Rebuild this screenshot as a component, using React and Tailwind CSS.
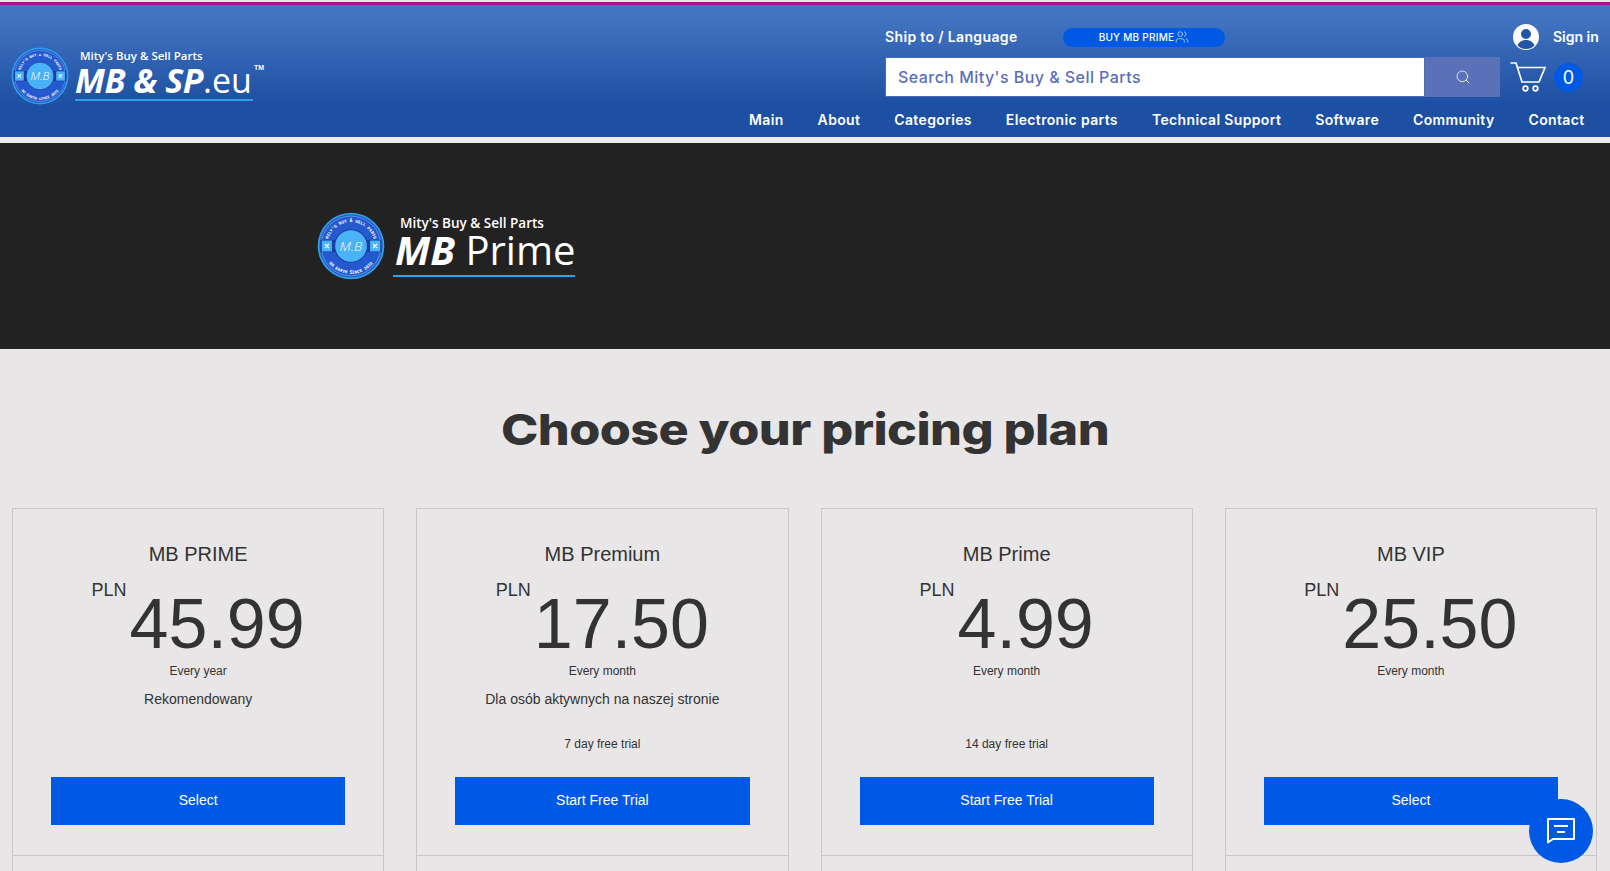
import React from "react";
import { Search, Users } from "lucide-react";

const plans = [
  { name: "MB PRIME", price: "45.99", period: "Every year", desc: "Rekomendowany", trial: "", cta: "Select" },
  { name: "MB Premium", price: "17.50", period: "Every month", desc: "Dla osób aktywnych na naszej stronie", trial: "7 day free trial", cta: "Start Free Trial" },
  { name: "MB Prime", price: "4.99", period: "Every month", desc: "", trial: "14 day free trial", cta: "Start Free Trial" },
  { name: "MB VIP", price: "25.50", period: "Every month", desc: "", trial: "", cta: "Select" },
];

const navItems = ["Main", "About", "Categories", "Electronic parts", "Technical Support", "Software", "Community", "Contact"];

// round badge of the logo, same drawing in the header and in the banner
const LogoBadge = ({ size, id }) => (
  <svg width={size} height={size} viewBox="0 0 100 100" className="shrink-0">
    <defs>
      <path id={`${id}-top`} d="M 15 50 A 35 35 0 0 1 85 50" />
      <path id={`${id}-bottom`} d="M 9 50 A 41 41 0 0 0 91 50" />
    </defs>
    <circle cx="50" cy="50" r="49" fill="#2f9fe8" />
    <circle cx="50" cy="50" r="46.5" fill="#2459cf" />
    <circle cx="50" cy="50" r="44" fill="none" stroke="#7fc4f5" strokeWidth="0.8" />
    <text fontSize="6.5" fontWeight="700" fill="#fff" fontFamily="'Liberation Mono', monospace">
      <textPath href={`#${id}-top`} startOffset="50%" textAnchor="middle">MILY'S BUY &amp; SELL PARTS</textPath>
    </text>
    <text fontSize="6.5" fontWeight="700" fill="#fff" fontFamily="'Liberation Mono', monospace">
      <textPath href={`#${id}-bottom`} startOffset="50%" textAnchor="middle">NO EARTH SINCE 2022</textPath>
    </text>
    <rect x="5" y="41" width="90" height="18" fill="#1a3f9e" />
    <rect x="7" y="42" width="15" height="16" fill="#4ab2f7" />
    <rect x="78" y="42" width="15" height="16" fill="#4ab2f7" />
    <path d="M11.5 47l6 6M17.5 47l-6 6M82.500 47l6 6M88.500 47l-6 6" stroke="#fff" strokeWidth="1.8" />
    <circle cx="50" cy="50" r="24" fill="#4ab2f7" stroke="#1a3f9e" strokeWidth="1.5" />
    <text x="50" y="57" fontSize="20" fontStyle="italic" fontWeight="300" fill="#fff" textAnchor="middle" fontFamily="'Open Sans', sans-serif">M.B</text>
  </svg>
);

const CartIcon = () => (
  <svg width="37" height="30" viewBox="0 0 37 30" fill="none" stroke="#fff" strokeWidth="1.7">
    <path d="M0.5 1h5.5l6 19h17l6-14.5H8" />
    <circle cx="15.5" cy="26.5" r="2.3" />
    <circle cx="25.5" cy="26.5" r="2.3" />
  </svg>
);

const Avatar = () => (
  <svg width="26" height="26" viewBox="0 0 26 26">
    <circle cx="13" cy="13" r="13" fill="#fff" />
    <circle cx="13" cy="10" r="5" fill="#2456a8" />
    <path d="M4.5 21.5c1.500-4 5-5.500 8.500-5.500s7 1.500 8.500 5.500a12 12 0 0 1-17 0z" fill="#2456a8" />
  </svg>
);

const ChatIcon = () => (
  <svg width="28" height="26" viewBox="0 0 28 26" fill="none" stroke="#fff" strokeWidth="2">
    <path d="M1 1h26v20H6l-5 3.500z" strokeLinejoin="round" />
    <path d="M7 8h14M10 14h8" />
  </svg>
);

const PlanCard = ({ plan }) => (
  <div className="border border-[#c8c6c6] text-center text-[#333]">
    <div className="pt-[33px] pb-[30px] px-[38px] h-[347px] border-b border-[#c8c6c6]">
      <h3 className="text-[20px] leading-6">{plan.name}</h3>
      <div className="flex justify-center items-start mt-[14px] h-[77px]">
        <span className="text-[18px] leading-5">PLN</span>
        <span className="text-[70px] leading-[70px] mt-[9px] ml-[3px]">{plan.price}</span>
      </div>
      <p className="text-[12px] leading-4 mt-[6px]">{plan.period}</p>
      <p className="text-[14px] leading-5 mt-[10px] h-5">{plan.desc}</p>
      <p className="text-[12px] leading-4 mt-[27px] h-4">{plan.trial}</p>
      <button className="block w-full h-12 mt-[25px] pb-[2px] bg-[#0059e5] text-white text-[14px]">{plan.cta}</button>
    </div>
    <div className="h-10"></div>
  </div>
);

const App = () => {
  return (
    <div className="h-[871px] overflow-hidden bg-[#e8e6e6] font-['Liberation_Sans',Arial,sans-serif]">
      <div className="pt-[2px] bg-[#e8e6e6]">
        <header className="h-[135px] border-t-[3px] border-[#a6128f] bg-linear-to-b from-[#4374c1] from-10% to-[#1d4fa2] to-75% flex text-white">
          {/* site logo */}
          <div className="relative w-[300px] shrink-0 pl-[11px] pt-[42px] flex items-start">
            <LogoBadge size={58} id="head" />
            <div className="ml-[6px] mt-[1px] font-['Open_Sans',sans-serif]">
              <div className="text-[11.5px] leading-[15px] font-semibold pl-[5px]">Mity's Buy &amp; Sell Parts</div>
              <div className="text-[34px] leading-[30px] mt-[2px] whitespace-nowrap">
                <span className="font-bold italic tracking-[-0.5px]">MB &amp; SP</span>
                <span>.eu</span>
              </div>
              <div className="h-[2px] w-[178px] bg-[#2f9fe8] mt-[4px]"></div>
            </div>
            <span className="absolute left-[254px] top-[58px] text-[7px] font-bold">TM</span>
          </div>

          {/* search, account and nav */}
          <div className="ml-auto w-[861px] flex flex-col font-['Inter',sans-serif]">
            <div className="flex items-center h-[26px] mt-[19px] pl-[136px]">
              <span className="w-[178px] -mt-[2px] text-[14px] font-semibold tracking-[0.35px]">Ship to / Language</span>
              <div className="w-[162px] h-[19px] rounded-full bg-[#0059e5] flex items-center justify-center gap-[1px] text-[10px] font-medium tracking-[0.25px]">
                BUY MB PRIME
                <Users size={14} strokeWidth={1} />
              </div>
              <div className="ml-[288px]">
                <Avatar />
              </div>
              <span className="ml-[14px] -mt-[2px] text-[14px] font-semibold">Sign in</span>
            </div>

            <div className="flex items-center h-10 mt-[7px] pl-[136px]">
              <div className="w-[540px] h-10 bg-white border border-[#4a6ab5] flex items-center pl-[12px] text-[#5a6eb8] text-[16px] font-medium tracking-[0.45px]">
                Search Mity's Buy &amp; Sell Parts
              </div>
              <div className="w-[75px] h-10 bg-[#5a70b8] flex items-center justify-center">
                <Search size={16} strokeWidth={1.2} />
              </div>
              <div className="ml-[10px]">
                <CartIcon />
              </div>
              <div className="ml-[7px] w-[29px] h-[29px] rounded-full bg-[#0059e5] flex items-center justify-center text-[18px]">0</div>
            </div>

            <nav className="flex gap-[34px] h-[18px] mt-[14px] text-[14px] leading-[18px] font-semibold tracking-[0.35px] whitespace-nowrap">
              {navItems.map((item) => (
                <span key={item}>{item}</span>
              ))}
            </nav>
          </div>
        </header>
      </div>

      <div className="h-[6px] bg-[#eeeded]"></div>

      <section className="h-[206px] bg-[#222] text-white flex items-start pl-[317px] pt-[69px]">
        <LogoBadge size={68} id="banner" />
        <div className="ml-[8px] mt-[2px] font-['Open_Sans',sans-serif]">
          <div className="text-[13.5px] leading-[18px] font-semibold pl-[7px]">Mity's Buy &amp; Sell Parts</div>
          <div className="text-[40px] leading-[36px] pl-[2px] whitespace-nowrap">
            <span className="font-bold italic">MB</span> <span>Prime</span>
          </div>
          <div className="h-[2px] w-[182px] bg-[#2f9fe8] mt-[7px]"></div>
        </div>
      </section>

      <h1 className="mt-[52px] h-[56px] text-center text-[#333] text-[43px] leading-[56px] font-['Inter',sans-serif] font-extrabold scale-x-[1.17] tracking-[-0.5px]">
        Choose your pricing plan
      </h1>

      <div className="grid grid-cols-4 gap-8 pl-3 pr-[13px] mt-[51px]">
        {plans.map((plan) => (
          <PlanCard key={plan.name} plan={plan} />
        ))}
      </div>

      <button className="fixed right-[17px] bottom-[8px] w-16 h-16 rounded-full bg-[#0059e5] flex items-center justify-center">
        <ChatIcon />
      </button>
    </div>
  );
};

export default App;
